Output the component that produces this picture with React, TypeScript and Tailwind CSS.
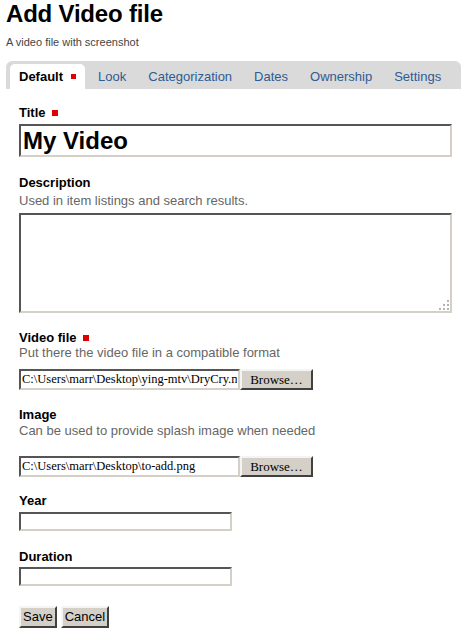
import React from "react";

const tabs = ["Look", "Categorization", "Dates", "Ownership", "Settings"];

const Req = () => (
  <span className="inline-block w-[6px] h-[6px] bg-[#e00000] ml-[6px] align-[1px]" />
);

const inset =
  "border-2 border-t-[#555555] border-l-[#555555] border-b-[#d4d0c8] border-r-[#d4d0c8] bg-white outline-none";

const outset =
  "border-2 border-t-[#f4f4f4] border-l-[#f4f4f4] border-b-[#404040] border-r-[#404040] bg-[#d4d0c8]";

const FileInput = ({ value }: { value: string }) => (
  <div className="flex h-[21px] font-['Liberation_Serif',serif] text-[12.5px]">
    <input
      readOnly
      value={value}
      className={`${inset} w-[221px] h-[21px] px-[1px] text-black font-['Liberation_Serif',serif] text-[12.5px]`}
    />
    <div className={`${outset} w-[73px] text-center leading-[17px] text-black text-[13px]`}>Browse…</div>
  </div>
);

export default function App() {
  return (
    <div className="bg-white min-h-screen w-[468px] font-['Liberation_Sans',Arial,sans-serif] text-black">
      <div className="pl-[6px]">
        <h1 className="text-[24px] leading-[28px] font-bold tracking-[-0.2px]">Add Video file</h1>
        <p className="text-[11px] leading-[14px] mt-[7px] text-[#444444]">A video file with screenshot</p>
      </div>

      {/* tabs */}
      <div className="ml-[6px] mt-[12px] w-[455px] h-[28px] bg-[#dadada] rounded-t-[6px] pt-[3px] pl-[4px] flex text-[13px]">
        <div className="bg-white rounded-t-[5px] h-[25px] px-[9px] flex items-center font-bold">
          Default
          <span className="inline-block w-[5px] h-[5px] bg-[#e00000] ml-[8px]" />
        </div>
        <div className="flex ml-[2px]">
          {tabs.map((t) => (
            <div key={t} className="h-[25px] px-[11px] flex items-center text-[#2f5b94]">
              {t}
            </div>
          ))}
        </div>
      </div>

      {/* form */}
      <form className="pl-[19px] text-[13px]">
        <div className="mt-[16px] leading-[15px] font-bold">
          Title
          <Req />
        </div>
        <input
          readOnly
          value="My Video"
          className={`${inset} block mt-[4px] w-[433px] h-[33px] text-[24px] font-bold pl-[2px] font-['Liberation_Sans',Arial,sans-serif] text-black`}
        />

        <div className="mt-[18px] leading-[15px] font-bold">Description</div>
        <div className="mt-[3px] leading-[15px] text-[#666666]">Used in item listings and search results.</div>
        <div className={`${inset} relative mt-[5px] w-[433px] h-[100px]`}>
          <svg className="absolute right-[1px] bottom-[1px]" width="10" height="10" viewBox="0 0 10 10">
            <rect x="8" y="0" width="2" height="2" fill="#b4b4b4" />
            <rect x="4" y="4" width="2" height="2" fill="#b4b4b4" />
            <rect x="8" y="4" width="2" height="2" fill="#b4b4b4" />
            <rect x="0" y="8" width="2" height="2" fill="#b4b4b4" />
            <rect x="4" y="8" width="2" height="2" fill="#b4b4b4" />
            <rect x="8" y="8" width="2" height="2" fill="#b4b4b4" />
          </svg>
        </div>

        <div className="mt-[17px] leading-[15px] font-bold">
          Video file
          <Req />
        </div>
        <div className="mt-[0px] leading-[15px] text-[#666666]">Put there the video file in a compatible format</div>
        <div className="mt-[9px]">
          <FileInput value="C:\Users\marr\Desktop\ying-mtv\DryCry.mp4" />
        </div>

        <div className="mt-[17px] leading-[15px] font-bold">Image</div>
        <div className="mt-[1px] leading-[15px] text-[#666666]">Can be used to provide splash image when needed</div>
        <div className="mt-[18px]">
          <FileInput value="C:\Users\marr\Desktop\to-add.png" />
        </div>

        <div className="mt-[16px] leading-[15px] font-bold">Year</div>
        <input readOnly className={`${inset} block mt-[4px] w-[213px] h-[19px]`} />

        <div className="mt-[18px] leading-[15px] font-bold">Duration</div>
        <input readOnly className={`${inset} block mt-[3px] w-[213px] h-[19px]`} />

        <div className="mt-[20px] flex gap-[4px]">
          <div className={`${outset} h-[22px] px-[2px] leading-[18px]`}>Save</div>
          <div className={`${outset} h-[22px] px-[2px] leading-[18px]`}>Cancel</div>
        </div>
      </form>
    </div>
  );
}
